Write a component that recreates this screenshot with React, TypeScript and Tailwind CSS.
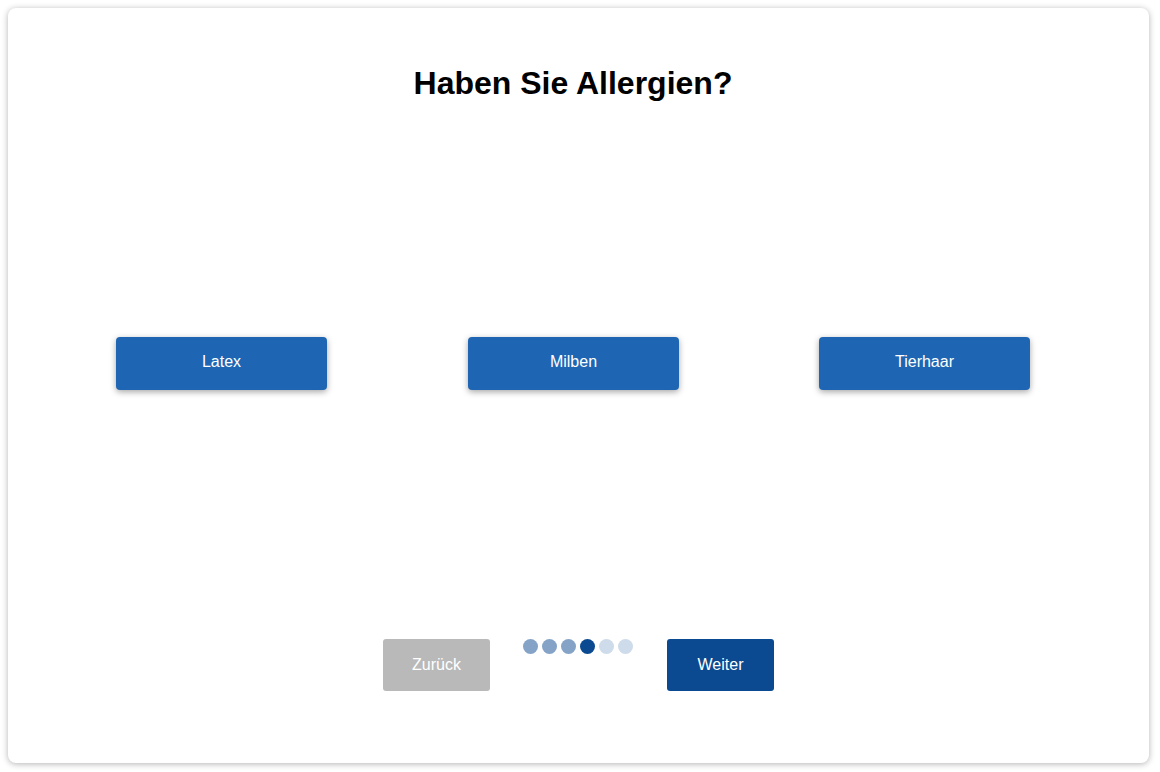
import React from "react";

export default function App() {
  const dots = ["bg-[#84a3c7]", "bg-[#84a3c7]", "bg-[#84a3c7]", "bg-[#0b4a90]", "bg-[#cedbea]", "bg-[#cedbea]"];
  const btn = "w-[211px] h-[53px] pb-[4px] rounded-[4px] bg-[#1e66b3] text-white text-[16px] shadow-[0_2px_6px_rgba(0,0,0,0.35)]";
  return (
    <div className="w-[1160px] h-[772px] bg-white pt-2 pl-2" style={{ fontFamily: '"Liberation Sans", Arial, sans-serif' }}>
      <div className="w-[1141px] h-[755px] rounded-lg bg-white shadow-[0_1px_6px_rgba(0,0,0,0.3)] flex flex-col">
        <div className="pl-[38px] w-[1092px] pt-[57px]">
          <h1 className="text-[32px] leading-[36px] font-bold text-black text-center">Haben Sie Allergien?</h1>
        </div>
        <div className="flex-1 pl-[108px] flex items-start pt-[236px]">
          <button className={btn}>Latex</button>
          <button className={`${btn} ml-[141px]`}>Milben</button>
          <button className={`${btn} ml-[140px]`}>Tierhaar</button>
        </div>
        <div className="flex justify-center items-start pb-[72px]">
          <button className="w-[107px] h-[52px] rounded-[3px] bg-[#b9b9b9] text-white text-[16px]">Zurück</button>
          <div className="flex gap-[4px] ml-[33px] mr-[34px]">
            {dots.map((c, i) => (
              <span key={i} className={`w-[15px] h-[15px] rounded-full ${c}`} />
            ))}
          </div>
          <button className="w-[107px] h-[52px] rounded-[3px] bg-[#0b4a90] text-white text-[16px]">Weiter</button>
        </div>
      </div>
    </div>
  );
}
